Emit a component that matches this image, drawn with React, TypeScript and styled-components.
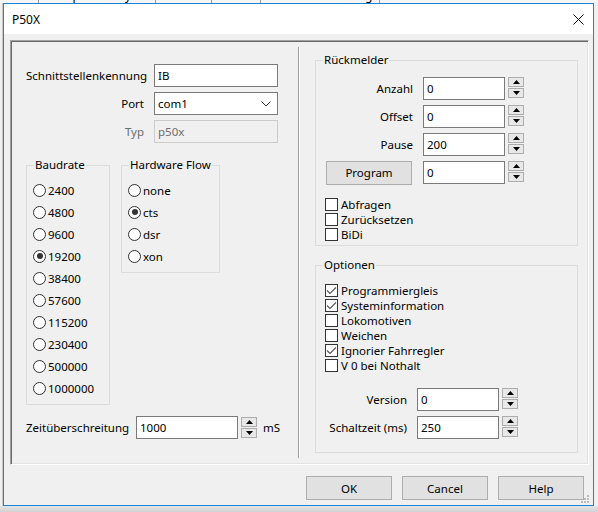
import React from 'react';
import styled, { createGlobalStyle } from 'styled-components';

const Global = createGlobalStyle`
  html, body { margin: 0; padding: 0; }
  body {
    width: 598px; height: 512px; overflow: hidden;
    background: #f0f0f0;
    font-family: "Noto Sans", "Open Sans", sans-serif;
    font-size: 11.5px; color: #000;
  }
  #root { width: 598px; height: 512px; }
  * { box-sizing: border-box; }
`;

const Screen = styled.div`
  width: 598px; height: 512px;
  display: flex; flex-direction: column;
  background: #f0f0f0;
`;

const BackTabs = styled.div`
  height: 3px; overflow: hidden;
  display: flex; align-items: flex-end;
  background: #f5f5f5;
`;

const BackTab = styled.span`
  line-height: 15px; padding: 0 6px;
  border-right: 1px solid #999;
  white-space: nowrap;
  font-size: 12px;
`;

const Middle = styled.div`
  display: flex; flex-direction: row;
`;

const SideEdge = styled.div<{ $w: number }>`
  width: ${p => p.$w}px; background: #f0f0f0;
  border-right: ${p => (p.$w === 3 ? '1px solid #c8c8c8' : 'none')};
`;

const Shadow = styled.div`
  flex: 1;
  background: linear-gradient(#e4e4e4, #d2d2d2);
`;

const Dialog = styled.div`
  position: relative;
  width: 591px; height: 503px;
  border: 1px solid #1883d7;
  background: #f0f0f0;
  display: flex; flex-direction: column;
`;

const TitleBar = styled.div`
  height: 30px; background: #fff;
  display: flex; align-items: center; justify-content: space-between;
  padding: 0 9px 0 8px;
  font-size: 12px;
`;

const Body = styled.div`
  flex: 1; display: flex; flex-direction: column;
  padding: 6px 4px 0 6px;
`;

const Sunken = styled.div`
  width: 579px; height: 425px;
  border: 1px solid; border-color: #a0a0a0 #ffffff #ffffff #a0a0a0;
  box-shadow: inset 1px 1px 0 #696969, inset -1px -1px 0 #e3e3e3;
  display: flex; flex-direction: row;
  padding: 1px;
`;

const Pane = styled.div<{ $w: number }>`
  width: ${p => p.$w}px;
  display: flex; flex-direction: column;
`;

const Splitter = styled.div`
  width: 2px; margin: 5px 0;
  border-left: 1px solid #a0a0a0;
  border-right: 1px solid #ffffff;
`;

const FormGrid = styled.div`
  margin: 22px 0 0 14px;
  display: grid;
  grid-template-columns: 118px 124px;
  grid-auto-rows: 23px;
  column-gap: 10px; row-gap: 5px;
  align-items: center;
`;

const Label = styled.span<{ $muted?: boolean; $align?: string; $w?: number }>`
  color: ${p => (p.$muted ? '#6d6d6d' : '#000')};
  text-align: ${p => p.$align || 'right'};
  white-space: nowrap;
  ${p => (p.$w ? `width: ${p.$w}px; flex: none;` : '')}
`;

const TextBox = styled.div<{ $w?: number; $disabled?: boolean }>`
  height: 23px;
  ${p => (p.$w ? `width: ${p.$w}px; flex: none;` : '')}
  border: 1px solid ${p => (p.$disabled ? '#cccccc' : '#7a7a7a')};
  background: ${p => (p.$disabled ? '#f0f0f0' : '#ffffff')};
  color: ${p => (p.$disabled ? '#6d6d6d' : '#000')};
  display: flex; align-items: center; justify-content: space-between;
  padding: 0 6px 0 3px;
`;

const GroupsRow = styled.div`
  display: flex; align-items: flex-start; gap: 11px;
  margin: 14px 0 0 14px;
`;

const Group = styled.fieldset<{ $w: number }>`
  width: ${p => p.$w}px;
  margin: 0; padding: 0;
  border: 1px solid #dcdcdc;
  min-width: 0;
`;

const Legend = styled.legend`
  margin-left: 7px; padding: 0 1px;
  line-height: 16px;
`;

const RadioList = styled.div`
  display: flex; flex-direction: column;
  padding: 6px 0 5px 6px;
`;

const OptionRow = styled.label<{ $h: number }>`
  height: ${p => p.$h}px;
  display: flex; align-items: center;
  white-space: nowrap;
`;

const RadioCircle = styled.span<{ $on?: boolean }>`
  width: 13px; height: 13px; flex: none;
  border: 1px solid #333; border-radius: 50%;
  background: #fff; margin-right: 2px;
  display: flex; align-items: center; justify-content: center;
  &::after {
    content: '';
    width: 6px; height: 6px; border-radius: 50%;
    background: ${p => (p.$on ? '#333' : 'transparent')};
  }
`;

const CheckBox = styled.span`
  width: 13px; height: 13px; flex: none;
  border: 1px solid #333; background: #fff;
  margin-right: 3px;
  display: flex; align-items: center; justify-content: center;
`;

const ZeitRow = styled.div`
  display: flex; align-items: center;
  margin: 11px 0 0 14px;
`;

const Spinner = styled.div`
  display: flex; flex-direction: column; gap: 1px;
  width: 16px; flex: none; margin-left: 3px;
`;

const SpinBtn = styled.div`
  height: 10px;
  border: 1px solid #adadad; background: #e8e8e8;
  display: flex; align-items: center; justify-content: center;
`;

const Unit = styled.span`
  margin-left: 6px;
`;

const RGroup = styled(Group)<{ $mt: number }>`
  margin-left: 15px;
  margin-top: ${p => p.$mt}px;
`;

const RInner = styled.div<{ $pt: number; $pb: number }>`
  display: flex; flex-direction: column;
  padding: ${p => p.$pt}px 0 ${p => p.$pb}px 10px;
`;

const SpinRow = styled.div<{ $mt?: number }>`
  display: flex; align-items: center; height: 23px;
  margin-top: ${p => p.$mt ?? 0}px;
`;

const FieldGap = styled.div`
  margin-left: 10px; display: flex;
`;

const Button = styled.div<{ $w?: number }>`
  width: ${p => p.$w ?? 86}px; height: 24px; flex: none;
  background: #e1e1e1; border: 1px solid #adadad;
  display: flex; align-items: center; justify-content: center;
`;

const CheckList = styled.div<{ $mt: number }>`
  display: flex; flex-direction: column;
  margin: ${p => p.$mt}px 0 0 -1px;
`;

const ButtonBar = styled.div`
  display: flex; justify-content: flex-end; gap: 10px;
  margin-top: 11px; padding-right: 5px;
`;

const Grip = styled.svg`
  position: absolute; right: 3px; bottom: 1px;
`;

const UpArrow = () => (
  <svg width="7" height="4" viewBox="0 0 7 4"><path d="M0 4 L3.5 0 L7 4 Z" fill="#000" /></svg>
);
const DownArrow = () => (
  <svg width="7" height="4" viewBox="0 0 7 4"><path d="M0 0 L7 0 L3.5 4 Z" fill="#000" /></svg>
);

const Spin = () => (
  <Spinner>
    <SpinBtn><UpArrow /></SpinBtn>
    <SpinBtn><DownArrow /></SpinBtn>
  </Spinner>
);

const Radio = ({ label, on }: { label: string; on?: boolean }) => (
  <OptionRow $h={22}>
    <RadioCircle $on={on} />
    {label}
  </OptionRow>
);

const Check = ({ label, on }: { label: string; on?: boolean }) => (
  <OptionRow $h={15}>
    <CheckBox>
      {on && (
        <svg width="11" height="11" viewBox="0 0 11 11">
          <path d="M1 5.5 L4 8.5 L10 2.5" fill="none" stroke="#555" strokeWidth="1.1" />
        </svg>
      )}
    </CheckBox>
    {label}
  </OptionRow>
);

const NumField = ({ label, value, labelW, mt }: { label: React.ReactNode; value: string; labelW: number; mt?: number }) => (
  <SpinRow $mt={mt}>
    <Label $w={labelW}>{label}</Label>
    <FieldGap>
      <TextBox $w={82}>{value}</TextBox>
      <Spin />
    </FieldGap>
  </SpinRow>
);

const bauds = ['2400', '4800', '9600', '19200', '38400', '57600', '115200', '230400', '500000', '1000000'];
const flows = ['none', 'cts', 'dsr', 'xon'];

export default function App() {
  return (
    <>
      <Global />
      <Screen>
        <BackTabs>
          <BackTab>hnet</BackTab>
          <BackTab>Gleisplan Analyser</BackTab>
          <BackTab>Accuras</BackTab>
          <BackTab>Finder</BackTab>
          <BackTab>Geräte-Zuordnung</BackTab>
        </BackTabs>
        <Middle>
          <SideEdge $w={3} />
          <Dialog>
            <TitleBar>
              <span>P50X</span>
              <svg width="11" height="11" viewBox="0 0 11 11">
                <path d="M0.5 0.5 L10.5 10.5 M10.5 0.5 L0.5 10.5" stroke="#000" strokeWidth="1" />
              </svg>
            </TitleBar>
            <Body>
              <Sunken>
                <Pane $w={286}>
                  <FormGrid>
                    <Label>Schnittstellenkennung</Label>
                    <TextBox>IB</TextBox>
                    <Label>Port</Label>
                    <TextBox>
                      com1
                      <svg width="10" height="6" viewBox="0 0 10 6">
                        <path d="M0.5 0.5 L5 5 L9.5 0.5" fill="none" stroke="#333" strokeWidth="1" />
                      </svg>
                    </TextBox>
                    <Label $muted>Typ</Label>
                    <TextBox $disabled>p50x</TextBox>
                  </FormGrid>
                  <GroupsRow>
                    <Group $w={84}>
                      <Legend>Baudrate</Legend>
                      <RadioList>
                        {bauds.map(b => <Radio key={b} label={b} on={b === '19200'} />)}
                      </RadioList>
                    </Group>
                    <Group $w={99}>
                      <Legend>Hardware Flow</Legend>
                      <RadioList>
                        {flows.map(f => <Radio key={f} label={f} on={f === 'cts'} />)}
                      </RadioList>
                    </Group>
                  </GroupsRow>
                  <ZeitRow>
                    <Label $w={110} $align="left">Zeitüberschreitung</Label>
                    <TextBox $w={102}>1000</TextBox>
                    <Spin />
                    <Unit>mS</Unit>
                  </ZeitRow>
                </Pane>
                <Splitter />
                <Pane $w={287}>
                  <RGroup $w={263} $mt={10}>
                    <Legend>Rückmelder</Legend>
                    <RInner $pt={9} $pb={3}>
                      <NumField label="Anzahl" value="0" labelW={87} />
                      <NumField label="Offset" value="0" labelW={87} mt={5} />
                      <NumField label="Pause" value="200" labelW={87} mt={5} />
                      <SpinRow $mt={5}>
                        <Label $w={87} $align="left"><Button>Program</Button></Label>
                        <FieldGap>
                          <TextBox $w={82}>0</TextBox>
                          <Spin />
                        </FieldGap>
                      </SpinRow>
                      <CheckList $mt={13}>
                        <Check label="Abfragen" />
                        <Check label="Zurücksetzen" />
                        <Check label="BiDi" />
                      </CheckList>
                    </RInner>
                  </RGroup>
                  <RGroup $w={263} $mt={11}>
                    <Legend>Optionen</Legend>
                    <RInner $pt={10} $pb={13}>
                      <CheckList $mt={0}>
                        <Check label="Programmiergleis" on />
                        <Check label="Systeminformation" on />
                        <Check label="Lokomotiven" />
                        <Check label="Weichen" />
                        <Check label="Ignorier Fahrregler" on />
                        <Check label="V 0 bei Nothalt" />
                      </CheckList>
                      <NumField label="Version" value="0" labelW={81} mt={15} />
                      <NumField label="Schaltzeit (ms)" value="250" labelW={81} mt={5} />
                    </RInner>
                  </RGroup>
                </Pane>
              </Sunken>
              <ButtonBar>
                <Button>OK</Button>
                <Button>Cancel</Button>
                <Button>Help</Button>
              </ButtonBar>
            </Body>
            <Grip width="9" height="9" viewBox="0 0 9 9">
              <rect x="6" y="0" width="2" height="2" fill="#bcbcbc" />
              <rect x="3" y="3" width="2" height="2" fill="#bcbcbc" />
              <rect x="6" y="3" width="2" height="2" fill="#bcbcbc" />
              <rect x="0" y="6" width="2" height="2" fill="#bcbcbc" />
              <rect x="3" y="6" width="2" height="2" fill="#bcbcbc" />
              <rect x="6" y="6" width="2" height="2" fill="#bcbcbc" />
            </Grip>
          </Dialog>
          <SideEdge $w={4} />
        </Middle>
        <Shadow />
      </Screen>
    </>
  );
}
